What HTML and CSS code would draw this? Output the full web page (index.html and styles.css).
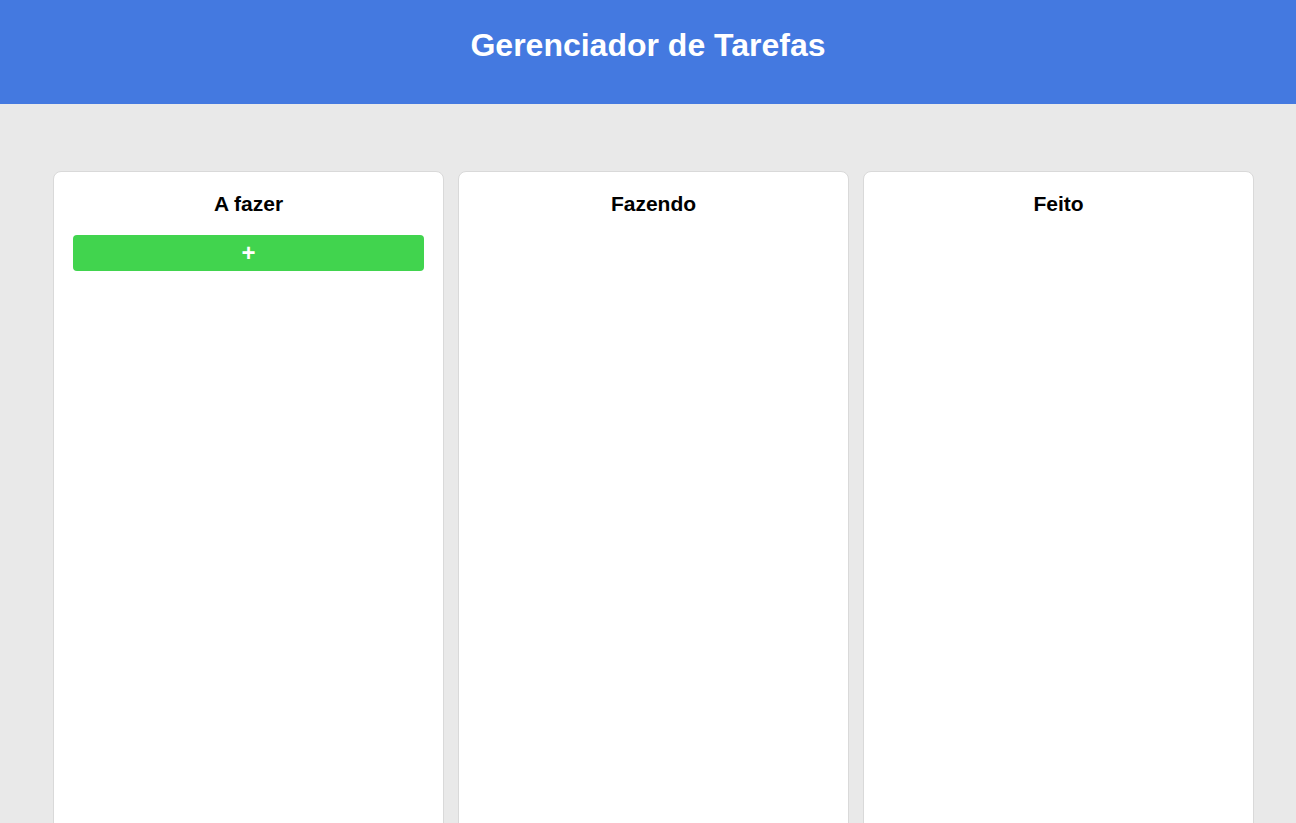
FILE: index.html
```html
<!DOCTYPE html>
<html lang="pt-BR">
<head>
<meta charset="utf-8">
<title>Gerenciador de Tarefas</title>
<link rel="stylesheet" href="styles.css">
</head>
<body>
<header class="topbar">
  <h1 class="title">Gerenciador de Tarefas</h1>
</header>
<main class="board">
  <section class="column">
    <h2 class="column-title">A fazer</h2>
    <button class="add-btn" type="button">+</button>
  </section>
  <section class="column">
    <h2 class="column-title">Fazendo</h2>
  </section>
  <section class="column">
    <h2 class="column-title">Feito</h2>
  </section>
</main>
</body>
</html>
```
FILE: styles.css
```css
* { box-sizing: border-box; }
html, body { margin: 0; padding: 0; }
body {
  background: #e9e9e9;
  font-family: "Liberation Sans", Arial, sans-serif;
  color: #000;
}
.topbar {
  background: #4479e0;
  color: #fff;
  text-align: center;
  padding: 27px 0 40px;
}
.title {
  margin: 0;
  font-size: 32px;
  line-height: 37px;
  font-weight: bold;
}
.board {
  display: flex;
  gap: 14px;
  padding: 67px 0 40px 53px;
}
.column {
  width: 391px;
  min-height: 720px;
  background: #fff;
  border: 1px solid #d9d9d9;
  border-radius: 8px;
  padding: 20px 19px 19px;
  display: flex;
  flex-direction: column;
}
.column-title {
  margin: 0 0 19px;
  font-size: 21px;
  line-height: 24px;
  text-align: center;
  font-weight: bold;
}
.add-btn {
  width: 100%;
  height: 36px;
  border: none;
  border-radius: 4px;
  background: #41d44e;
  color: #fff;
  font-family: "Liberation Sans", Arial, sans-serif;
  font-size: 24px;
  font-weight: bold;
  line-height: 36px;
  padding: 0;
  cursor: pointer;
}
```
